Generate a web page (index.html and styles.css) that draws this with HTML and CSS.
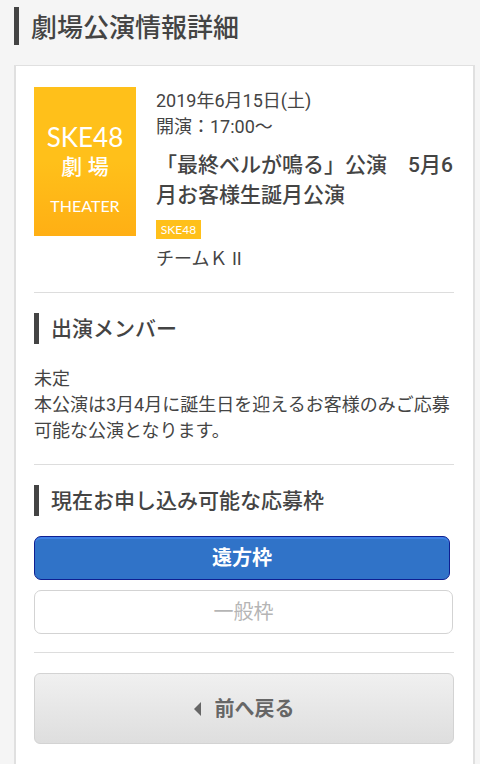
FILE: index.html
```html
<!DOCTYPE html>
<html lang="ja">
<head>
    <meta charset="UTF-8">
    <meta name="viewport" content="width=device-width, initial-scale=1.0">
    <title>劇場公演情報詳細</title>
    <link rel="stylesheet" href="styles.css">
</head>
<body>
    <h1 class="page-title">劇場公演情報詳細</h1>
    <main class="card">
        <section class="event">
            <div class="poster">
                <span class="poster-name">SKE48</span>
                <span class="poster-place">劇 場</span>
                <span class="poster-sub">THEATER</span>
            </div>
            <div class="event-info">
                <p>2019年6月15日(土)</p>
                <p>開演：17:00〜</p>
                <h2 class="event-title">「最終ベルが鳴る」公演　5月6月お客様生誕月公演</h2>
                <span class="tag">SKE48</span>
                <p>チームＫ II</p>
            </div>
        </section>
        <section class="members">
            <h2 class="section-title">出演メンバー</h2>
            <p>未定<br>本公演は3月4月に誕生日を迎えるお客様のみご応募可能な公演となります。</p>
        </section>
        <section class="entry">
            <h2 class="section-title">現在お申し込み可能な応募枠</h2>
            <button type="button" class="btn btn-primary">遠方枠</button>
            <button type="button" class="btn btn-disabled" disabled>一般枠</button>
        </section>
        <a class="back" href="#">
            <svg class="back-icon" width="8" height="14" viewBox="0 0 8 14" aria-hidden="true"><path d="M7 0v14L0 7z" fill="#666"/></svg>
            前へ戻る
        </a>
    </main>
</body>
</html>
```

FILE: styles.css
```css
* {
    box-sizing: border-box;
}

body {
    display: flex;
    flex-direction: column;
    min-height: 100vh;
    margin: 0;
    padding: 7px 5px 0 14px;
    background-color: #f5f5f5;
    color: #444;
    font-family: Roboto, "Noto Sans CJK JP", sans-serif;
    font-size: 18px;
    line-height: 26px;
}

h1, h2, p {
    margin: 0;
}

.page-title {
    margin-bottom: 20px;
    padding: 4px 0 0 12px;
    border-left: 5px solid #444;
    font-size: 26px;
    font-weight: 500;
    line-height: 34px;
}

.card {
    flex: 1;
    padding: 21px 19px 0 18px;
    background-color: #fff;
    border: 2px solid #e0e0e0;
    border-width: 1px 2px 0;
}

.event {
    display: flex;
    align-items: flex-start;
    gap: 20px;
    padding-bottom: 20px;
}

.poster {
    display: flex;
    flex: 0 0 102px;
    flex-direction: column;
    align-items: center;
    height: 149px;
    padding-top: 35px;
    background: linear-gradient(#ffc01a 50%, #ffaf14);
    color: #fff;
    font-family: Lato, "Noto Sans CJK JP", sans-serif;
}

.poster-name {
    font-size: 26px;
    line-height: 30px;
}

.poster-place {
    font-size: 21px;
    font-weight: 500;
    line-height: 28px;
}

.poster-sub {
    margin-top: 12px;
    font-size: 16px;
    line-height: 28px;
}

.event-info {
    padding-top: 1px;
}

.event-title {
    margin: 10px 0;
    font-size: 21px;
    font-weight: 500;
    line-height: 30px;
}

.tag {
    display: block;
    width: 45px;
    margin-bottom: 7px;
    background-color: #ffc01a;
    color: #fff;
    font-family: Lato, sans-serif;
    font-size: 12px;
    line-height: 19px;
    text-align: center;
}

.members, .entry {
    padding: 20px 0;
    border-top: 1px solid #ddd;
}

.members p {
    padding-top: 2px;
}

.section-title {
    margin-bottom: 20px;
    padding: 2px 0 0 12px;
    border-left: 5px solid #444;
    font-size: 21px;
    font-weight: 500;
    line-height: 29px;
}

.entry {
    padding-bottom: 18px;
    border-bottom: 1px solid #ddd;
}

.btn {
    display: block;
    width: calc(100% - 1px);
    height: 44px;
    border: 1px solid #d3d3d3;
    border-radius: 7px;
    font-family: inherit;
    font-size: 20px;
    line-height: 30px;
}

.btn-primary {
    width: calc(100% - 4px);
    margin-bottom: 10px;
    background-color: #3073c8;
    border-color: #0f1f91;
    box-shadow: inset 0 2px 0 #3f80e6;
    color: #fff;
    font-weight: 700;
    cursor: pointer;
}

.btn-disabled {
    background-color: #fff;
    color: #b5b5b5;
}

.back {
    display: flex;
    align-items: center;
    justify-content: center;
    gap: 13px;
    height: 71px;
    margin-top: 20px;
    background: linear-gradient(#f0f0f0, #dedede);
    border: 1px solid #d3d3d3;
    border-radius: 6px;
    color: #666;
    font-size: 20px;
    font-weight: 700;
    text-decoration: none;
}
```
